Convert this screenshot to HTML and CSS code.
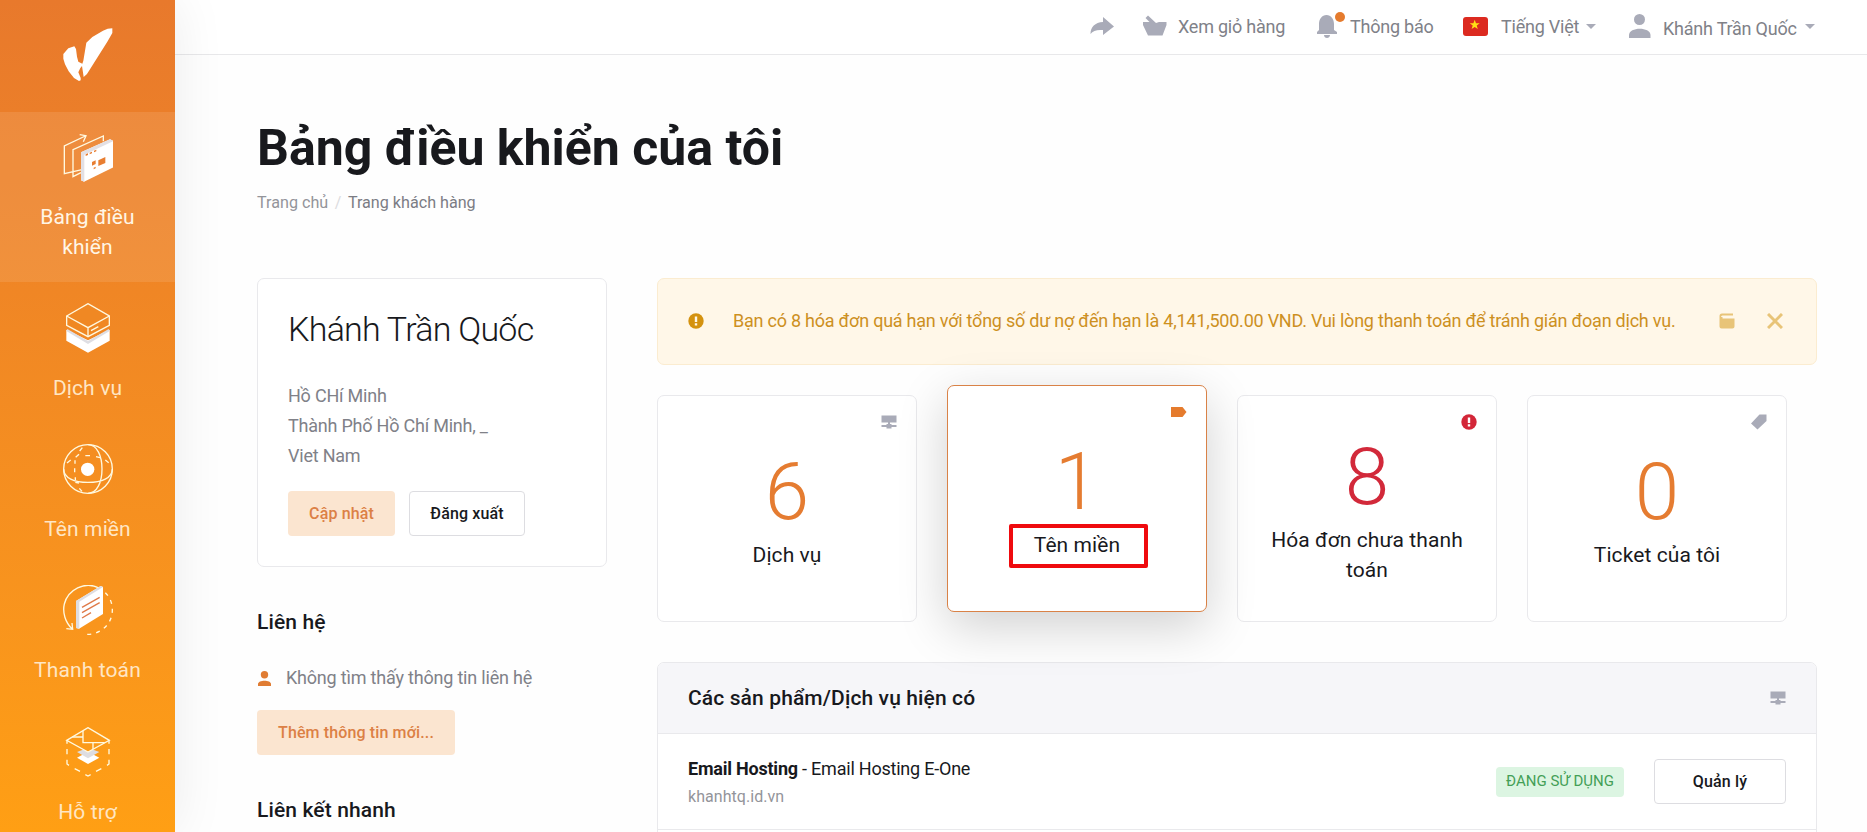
FILE: index.html
```html
<!DOCTYPE html>
<html lang="vi">
<head>
<meta charset="utf-8">
<title>Bảng điều khiển của tôi</title>
<link rel="stylesheet" href="styles.css">
</head>
<body>
<div class="app">
  <aside class="sidebar">
    <a class="logo">
      <svg width="50" height="54" viewBox="188 86 150 162" fill="#fff"><path d="M189 178V164L204 147L222 141L227 149L230 172L234 187L246 193L249 184L258 130L276 113L308 94L322 88L336 87V101L321 127L260 224L250 233L245 200L240 206L234 219L241 236V243L236 245L221 236L205 216L194 195Z"/></svg>
    </a>
    <a class="nav-item active">
      <svg class="nav-icon" viewBox="187 399 150 150" fill="none" stroke="#fff9e0" stroke-width="4"><path d="M244 509L191 521V438L254 408M237 404L256 407L248 425M308 424V408L217 449V530L241 518"/><path d="M241 457L328 418L338 423V502L250 545L241 541Z" fill="#fff" stroke="none"/><path d="M241 457L328 418L338 423L251 464V545L241 541Z" fill="#e3e0e4" stroke="none"/><path d="M255 468v-5l7-3v5zM267 463v-5l7-3v5zM280 457v-5l7-3v5zM274 486l11-5v11l-11 5zM293 481l21-10v18l-21 9zM279 503l6-3v5l-6 3z" fill="#e87e32" stroke="none"/></svg>
      <span>Bảng điều khiển</span>
    </a>
    <a class="nav-item">
      <svg class="nav-icon" viewBox="189 39 150 150" fill="none" stroke="#fff9e0" stroke-width="4"><path d="M199 119L264 151L329 119V152L264 188L199 152Z" fill="#fff" stroke="none"/><path d="M202 117L264 153L326 117L329 123L264 162L199 123Z" fill="#dedee3" stroke="none"/><path d="M200 78L264 41L328 78V106L264 140L200 106Z" fill="#f08823"/><path d="M200 78L264 113L328 78M264 113V139M273 122L295 110"/></svg>
      <span>Dịch vụ</span>
    </a>
    <a class="nav-item">
      <svg class="nav-icon" viewBox="189 462 150 150" fill="none" stroke="#fff9e0" stroke-width="4"><circle cx="264" cy="537" r="73"/><path d="M191 537C191 564 223 577 264 577S337 564 337 537M264 464C292 464 306 499 306 537S292 610 264 610"/><path d="M201 519l11-9M227 502l10-9M256 497h14M288 500l12 3M316 510l10 8M239 483l8-10M225 511v10M224 535v12M226 562v9M238 595l8 9M237 579l-11-2"/><circle cx="263" cy="538" r="20" fill="#fff" stroke="none"/></svg>
      <span>Tên miền</span>
    </a>
    <a class="nav-item">
      <svg class="nav-icon" viewBox="189 75 150 150" fill="none" stroke="#fff9e0" stroke-width="4"><path d="M297 84C254 62 204 89 193 132C187 158 196 187 216 206M199 206L218 208L216 189"/><path d="M316 98C330 112 337 130 337 150C337 190 305 222 264 223H250" stroke-dasharray="12 15"/><path d="M228 123L302 78L309 81V162L237 206L228 204Z" fill="#fff" stroke="none"/><path d="M228 123L302 78L309 81L238 125V206L228 204Z" fill="#dedde1" stroke="none"/><path d="M246 142L299 112M246 158L299 128M246 174L273 158" stroke="#df7a49"/></svg>
      <span>Thanh toán</span>
    </a>
    <a class="nav-item">
      <svg class="nav-icon" viewBox="189 501 150 150" fill="none" stroke="#fff9e0" stroke-width="4"><path d="M231 593L264 575L298 593L264 612Z" fill="#fff" stroke="none"/><path d="M231 576L264 563L298 576L264 595Z" fill="#dedde1" stroke="none"/><path d="M200 541L264 503L328 541L264 576Z" fill="#fb9a19"/><path d="M217 531H249M249 513V548H314M279 548V567"/><path d="M201 541V551M327 541V551M201 567V583M327 567V583M201 599V612L207 616M327 599V612L321 616M224 626L240 634M304 626L288 634M256 644L264 648L272 644"/></svg>
      <span>Hỗ trợ</span>
    </a>
  </aside>

  <div class="page">
    <header class="topbar">
      <svg class="ic-share" viewBox="0 0 24 20"><path d="M13 1L24 10.5L13 19V14C7 13.500 3 14.500 0.500 18C0.500 11 5 6.500 13 6Z"/></svg>
      <svg class="ic-cart" viewBox="0 0 24 21"><path d="M0 7H6.500L2.500 3L5 0.500L13 8L16 7H23.500V10L19.500 20.500H5L0 10Z"/></svg>
      <span class="t-cart">Xem giỏ hàng</span>
      <span class="bell"><svg width="22" height="24" viewBox="0 0 22 24"><path d="M1 20V18L3 16V10C3 5 6 1 10.500 1S18 5 18 10V16L21 18V20ZM8 21H14C14 25 8 25 8 21Z"/></svg><i class="dot"></i></span>
      <span class="t-bell">Thông báo</span>
      <svg class="flag" viewBox="0 0 25 19"><rect width="25" height="19" rx="3" fill="#dc2a20"/><path d="M11.700 2.800l1.300 3.400h3.700l-3 2.200 1.100 3.600-3.100-2.100-3.100 2.100 1.100-3.600-3-2.200h3.700z" fill="#ffe015"/></svg>
      <span class="t-lang">Tiếng Việt</span>
      <i class="caret"></i>
      <svg class="ic-user" viewBox="0 0 22 24"><circle cx="10.500" cy="5.500" r="5.500"/><path d="M0 24V21C0 12.500 21.500 12.500 21.500 21V24Z"/></svg>
      <span class="t-user">Khánh Trần Quốc</span>
      <i class="caret"></i>
    </header>

    <main class="content">
      <h1>Bảng điều khiển của tôi</h1>
      <nav class="crumbs"><a>Trang chủ</a><i>/</i><b>Trang khách hàng</b></nav>

      <div class="columns">
        <section class="left">
          <div class="card profile">
            <h2>Khánh Trần Quốc</h2>
            <p>Hồ CHí Minh<br>Thành Phố Hồ Chí Minh, _<br>Viet Nam</p>
            <div class="actions"><a class="btn soft update">Cập nhật</a><a class="btn outline logout">Đăng xuất</a></div>
          </div>
          <h3 class="contact-title">Liên hệ</h3>
          <div class="contact">
            <svg width="13" height="15" viewBox="0 0 13 15"><circle cx="6.500" cy="3.700" r="3.700"/><path d="M0 15V13C0 8.500 13 8.500 13 13V15Z"/></svg>
            <span>Không tìm thấy thông tin liên hệ</span>
          </div>
          <a class="btn soft add">Thêm thông tin mới...</a>
          <h3 class="quick-title">Liên kết nhanh</h3>
        </section>

        <section class="right">
          <div class="alert">
            <svg class="al-info" viewBox="0 0 16 16"><circle cx="8" cy="8" r="7.700"/><path d="M6.800 3.500h2.400v5.500h-2.400zM6.800 10.300h2.400v2.200h-2.400z" fill="#fff7e8"/></svg>
            <span class="al-text">Bạn có 8 hóa đơn quá hạn với tổng số dư nợ đến hạn là 4,141,500.00 VND. Vui lòng thanh toán để tránh gián đoạn dịch vụ.</span>
            <svg class="al-wallet" viewBox="0 0 16 16"><path d="M3 0.500H14V2.500H3.500Q2 2.500 2 4H3.500V5.500H15.500V13.500Q15.500 15.500 13.500 15.500H2.500Q0.500 15.500 0.500 13.500V3Q0.500 0.500 3 0.500Z"/></svg>
            <svg class="al-close" viewBox="0 0 16 16"><path d="M1 1L15 15M15 1L1 15"/></svg>
          </div>

          <div class="tiles">
            <div class="tile">
              <svg viewBox="0 0 16 16"><path d="M0.500 1.500H15.500V8.500H0.500ZM7 8.500H9V10H10.500V11H15.500V13H10.500V14.500H5.500V13H0.500V11H5.500V10H7Z"/></svg>
              <strong>6</strong><span>Dịch vụ</span>
            </div>
            <div class="tile raised">
              <svg viewBox="0 0 16 16"><path d="M0 3H11.500L15.500 8L11.500 13H0Z"/></svg>
              <strong>1</strong><span>Tên miền</span>
              <i class="marker"></i>
            </div>
            <div class="tile danger">
              <svg viewBox="0 0 16 16"><circle cx="8" cy="8" r="7.700"/><path d="M6.800 3.500h2.400v5.500h-2.400zM6.800 10.300h2.400v2.200h-2.400z" fill="#fff"/></svg>
              <strong>8</strong><span>Hóa đơn chưa thanh toán</span>
            </div>
            <div class="tile">
              <svg viewBox="0 0 16 16"><path d="M8.500 0.500H15.500V7L6.500 15.500L0 9.500Z"/></svg>
              <strong>0</strong><span>Ticket của tôi</span>
            </div>
          </div>

          <div class="panel">
            <div class="panel-head"><h3>Các sản phẩm/Dịch vụ hiện có</h3>
              <svg width="16" height="16" viewBox="0 0 16 16"><path d="M0.500 1.500H15.500V8.500H0.500ZM7 8.500H9V10H10.500V11H15.500V13H10.500V14.500H5.500V13H0.500V11H5.500V10H7Z"/></svg>
            </div>
            <div class="row">
              <div class="product"><div class="pname"><b>Email Hosting</b> - Email Hosting E-One</div><div class="domain">khanhtq.id.vn</div></div>
              <span class="badge">ĐANG SỬ DỤNG</span>
              <a class="btn outline manage">Quản lý</a>
            </div>
          </div>
        </section>
      </div>
    </main>
  </div>
</div>
</body>
</html>
```
FILE: styles.css
```css
* { box-sizing: border-box; }
body { margin: 0; font-family: Roboto, "Liberation Sans", sans-serif; color: #18191d; background: #fefefe; }
h1, h2, h3, p { margin: 0; }
i, b { font-style: normal; }
svg { display: block; flex: none; }
.app { display: flex; height: 832px; overflow: hidden; }

.sidebar { width: 175px; flex: none; background: linear-gradient(#e8792c, #f9951d 75%, #ff9f14); box-shadow: 0 0 50px rgba(0,0,0,.08); position: relative; z-index: 2; }
.logo { display: block; height: 112px; padding: 28px 0 0 62.500px; }
.nav-item { display: flex; flex-direction: column; align-items: center; gap: 20px; padding: 21px 30px 20px; color: #ffe6c4; font-size: 21px; letter-spacing: .12px; line-height: 30px; text-align: center; }
.nav-item:last-child { padding-top: 22px; }
.nav-item span { margin: 0 -6px; }
.nav-item.active span { margin: 0 8px; }
.nav-item.active { background: rgba(255,255,255,.1); color: #fff6e6; gap: 19px; }
.nav-icon { width: 50px; height: 50px; }

.page { flex: 1; min-width: 0; }
.topbar { height: 55px; border-bottom: 1px solid #e8e8ea; background: #fff; display: flex; align-items: center; padding-left: 915px; font-size: 18px; letter-spacing: -.22px; line-height: 24px; color: #808188; white-space: nowrap; }
.topbar svg { fill: #a9abb8; }
.ic-share { width: 24px; height: 20px; margin: 0 29px 2px 0; }
.ic-cart { width: 24px; height: 21px; margin: 0 11px 4px 0; }
.t-cart { width: 138px; }
.bell { position: relative; width: 22px; margin-right: 12px; }
.bell svg { margin-top: -3px; }
.dot { position: absolute; left: 19px; top: -5px; width: 10px; height: 10px; border-radius: 50%; background: #e57b2d; }
.t-bell { width: 113px; }
.flag { width: 25px; height: 19px; margin: 0 13px 1px 0; }
.t-lang { width: 85px; }
.caret { border: 5px solid transparent; border-top: 5px solid #a9abb8; border-bottom: 0; width: 10px; margin: 0 -1px 1px 0; }
.ic-user { width: 22px; height: 24px; margin: 0 12px 2px 34px; }
.t-user { width: 142px; padding-top: 3px; }

.content { padding: 61px 50px 0 82px; }
h1 { font-size: 50px; line-height: 64px; font-weight: 700; white-space: nowrap; }
.crumbs { display: flex; gap: 6.500px; font-size: 16.150px; line-height: 24px; margin-top: 11px; color: #93949a; }
.crumbs i { color: #dcdce0; }
.crumbs b { font-weight: 400; color: #7b7c84; }
.columns { display: flex; gap: 50px; margin-top: 63px; }
.left { width: 350px; flex: none; }
.right { width: 1160px; flex: none; }

.card { border: 1px solid #e9e9ec; border-radius: 7px; background: #fff; }
.profile { height: 289px; padding: 30px; }
.profile h2 { font-size: 34px; letter-spacing: -.75px; line-height: 40px; font-weight: 300; white-space: nowrap; }
.profile p { font-size: 18px; letter-spacing: -.22px; line-height: 30px; color: #808188; margin: 32px 0 20px; }
.actions { display: flex; gap: 14px; }
.btn { display: flex; align-items: center; justify-content: center; height: 45px; border-radius: 4px; font-size: 16px; letter-spacing: .13px; font-weight: 500; white-space: nowrap; }
.soft { background: #fbe5d0; color: #dc8045; }
.outline { border: 1px solid #dddde1; background: #fff; color: #18191d; }
.update { width: 107px; }
.logout { width: 116px; }
h3 { font-size: 21px; letter-spacing: .12px; line-height: 30px; font-weight: 500; white-space: nowrap; }
.contact-title { margin-top: 40px; }
.contact { display: flex; align-items: center; gap: 15px; margin-top: 26px; padding-left: 1px; font-size: 18px; letter-spacing: -.2px; line-height: 30px; color: #808188; white-space: nowrap; }
.contact svg { fill: #e07c33; }
.add { width: 198px; margin-top: 17px; }
.quick-title { margin-top: 40px; }

.alert { height: 87px; display: flex; align-items: center; border: 1px solid #fbecd0; border-radius: 7px; background: #fff7e8; padding: 0 31px 2px 30px; color: #cd901f; font-size: 18px; letter-spacing: -.23px; white-space: nowrap; }
.alert svg { width: 16px; height: 16px; }
.al-info { fill: #d4920f; margin-right: 29px; }
.al-text { width: 986px; }
.al-wallet { fill: #e8c478; margin-right: 32px; }
.al-close { stroke: #e8c478; stroke-width: 3; }

.tiles { display: flex; gap: 30px; margin-top: 30px; }
.tile { position: relative; width: 260px; height: 227px; border: 1px solid #e9e9ec; border-radius: 7px; background: #fff; display: flex; flex-direction: column; align-items: center; justify-content: center; text-align: center; padding: 4px 25px 0; }
.tile svg { position: absolute; right: 19px; top: 18px; width: 16px; height: 16px; fill: #a9abb8; }
.tile strong { font-size: 80px; line-height: 80px; font-weight: 300; color: #e57c31; margin-bottom: 8px; }
.tile span { font-size: 21px; letter-spacing: .08px; line-height: 30px; }
.tile.raised { border-color: #d98247; margin: -10px 0 10px; box-shadow: 0 15px 50px rgba(0,0,0,.18); z-index: 1; }
.tile.raised svg { fill: #e57b2d; }
.tile.danger strong { color: #d2293a; }
.tile.danger svg { fill: #d32638; }
.marker { position: absolute; left: 60.500px; top: 138px; width: 139px; height: 44px; border: 4px solid #ef0a0e; border-radius: 2px; }

.panel { margin-top: 40px; border: 1px solid #e9e9ec; border-radius: 7px; background: #fff; height: 240px; overflow: hidden; }
.panel-head { height: 71px; display: flex; align-items: center; justify-content: space-between; padding: 0 30px; background: #f6f6f9; border-bottom: 1px solid #e9e9ec; }
.panel-head svg { fill: #a9abb8; }
.row { height: 96px; display: flex; align-items: center; padding: 0 30px; border-bottom: 1px solid #e9e9ec; }
.product { flex: 1; }
.pname { font-size: 18px; letter-spacing: -.22px; line-height: 30px; }
.domain { font-size: 16px; letter-spacing: .05px; line-height: 25px; color: #93949a; }
.badge { width: 128px; height: 30px; border-radius: 4px; background: #dcf5e2; color: #449f57; font-size: 15px; line-height: 28px; text-align: center; margin-right: 30px; }
.manage { width: 132px; }
```
